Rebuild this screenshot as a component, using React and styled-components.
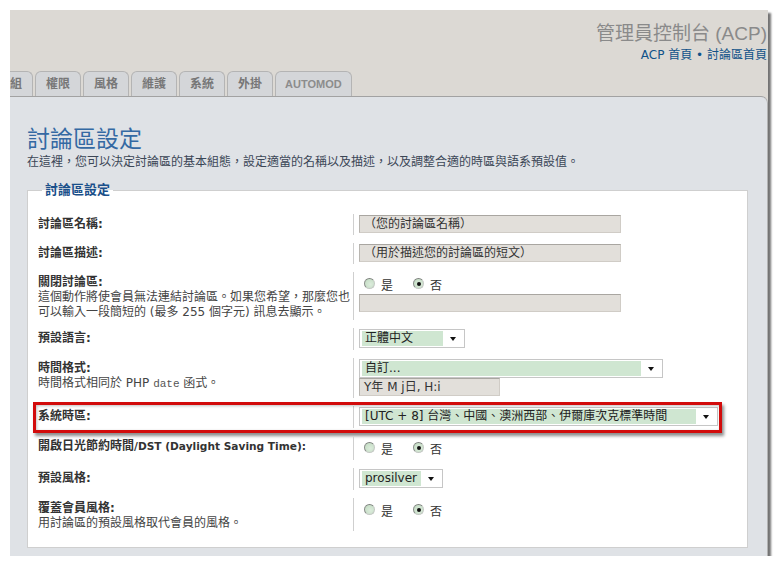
import React from 'react';
import styled, { createGlobalStyle } from 'styled-components';

const FONT = `"DejaVu Sans", "Noto Sans CJK TC", sans-serif`;

const GlobalStyle = createGlobalStyle`
  html, body { margin: 0; padding: 0; background: #fff; }
  body { font-family: ${FONT}; font-size: 12px; color: #333; }
  * { box-sizing: border-box; }
`;

const Frame = styled.div`
  margin: 10px 0 0 10px;
  width: 758px;
  height: 546px;
  display: flex;
  flex-direction: column;
  background: #dcd9d4;
  box-shadow: 3px 3px 2px rgba(0, 0, 0, 0.55);
  overflow: hidden;
`;

const Header = styled.header`
  height: 86px;
  display: flex;
  flex-direction: column;
  padding-top: 12px;
`;

const Brand = styled.div`
  align-self: flex-end;
  text-align: right;
  padding-right: 1px;
`;

const BrandTitle = styled.div`
  font-family: "Liberation Sans", "Noto Sans CJK TC", sans-serif;
  font-size: 19px;
  line-height: 24px;
  color: #8a8a8a;
  white-space: nowrap;
`;

const BrandLinks = styled.div`
  margin-top: 2px;
  font-size: 12px;
  line-height: 15px;
  color: #105289;
  white-space: nowrap;
`;

const TabBar = styled.nav`
  margin-top: auto;
  margin-left: -23px;
  display: flex;
  align-items: flex-end;
  gap: 2px;
`;

const Tab = styled.span`
  height: 25px;
  padding: 0 ${(p) => (p.$latin ? 9 : 10)}px;
  border: 1px solid #b4b4b4;
  border-bottom: 0;
  border-radius: 6px 6px 0 0;
  background: #d4d6d9;
  color: ${(p) => (p.$latin ? '#8c8c8c' : '#777')};
  font-family: ${(p) => (p.$latin ? '"Liberation Sans", sans-serif' : FONT)};
  font-weight: bold;
  font-size: ${(p) => (p.$latin ? '11px' : '12px')};
  line-height: 25px;
  white-space: nowrap;
`;

const Panel = styled.main`
  flex: 1;
  display: flex;
  flex-direction: column;
  background: #dfe2e6;
  border-top: 1px solid #a2a2a2;
  border-right: 1px solid #b2b2b2;
  border-top-right-radius: 7px;
  padding: 0 19px 8px 17px;
`;

const PageTitle = styled.h1`
  margin: 28px 0 0;
  font-size: 23px;
  line-height: 28px;
  font-weight: normal;
  color: #3469a3;
`;

const Intro = styled.p`
  margin: 2px 0 0;
  font-size: 12px;
  line-height: 15px;
  color: #3b4656;
`;

const Fieldset = styled.fieldset`
  flex: 1;
  margin: 12px 0 0;
  padding: 16px 10px 0;
  border: 1px solid #cfcfcf;
  background: #fff;
  min-width: 0;
`;

const Legend = styled.legend`
  margin-left: 4px;
  padding: 0 3px;
  font-size: 13px;
  line-height: 16px;
  font-weight: bold;
  color: #1a4f8a;
`;

const Row = styled.div`
  position: relative;
  display: grid;
  grid-template-columns: 315px 1fr;
  margin-bottom: 8px;
`;

const Marked = styled.div`
  position: absolute;
  left: -5px;
  top: -4px;
  width: 689px;
  height: 31px;
  border: 3px solid #d20b0b;
  box-shadow: 2px 3px 3px rgba(0, 0, 0, 0.45), inset 1px 1px 3px rgba(0, 0, 0, 0.25);
  pointer-events: none;
`;

const Label = styled.div`
  padding-top: 3px;
  line-height: 15px;
`;

const LabelTitle = styled.div`
  font-weight: bold;
  color: #333;
  white-space: nowrap;
`;

const Latin = styled.span`
  font-size: 10.6px;
`;

const Hint = styled.div`
  color: #444;
`;

const Code = styled.span`
  font-family: "Liberation Mono", monospace;
  font-size: 11px;
  color: #555;
`;

const Field = styled.div`
  border-left: 1px solid #cfcfcf;
  padding: 1px 0 2px 5px;
  display: flex;
  flex-direction: column;
  align-items: flex-start;
`;

const TextBox = styled.div`
  width: ${(p) => p.$w}px;
  height: 18px;
  padding: 0 4px;
  background: #e2dfda;
  border: 1px solid #d0ccc6;
  border-top-color: #a9a6a1;
  border-left-color: #b9b6b1;
  font-size: 12px;
  line-height: 16px;
  color: #333;
  white-space: nowrap;
  overflow: hidden;
`;

const Select = styled.div`
  width: ${(p) => p.$w}px;
  height: 19px;
  display: flex;
  align-items: stretch;
  padding: 1px 2px;
  background: #fff;
  border: 1px solid #c6c6c6;
`;

const Choice = styled.span`
  flex: 1;
  padding: 0 3px;
  background: #cfe6d1;
  font-size: 12px;
  line-height: 15px;
  color: #222;
  white-space: nowrap;
  overflow: hidden;
`;

const Caret = styled.span`
  width: 19px;
  display: flex;
  align-items: center;
  justify-content: center;
  &::after {
    content: '';
    border-left: 3.5px solid transparent;
    border-right: 3.5px solid transparent;
    border-top: 4px solid #111;
    margin-top: 1px;
  }
`;

const RadioGroup = styled.div`
  display: flex;
  height: 21px;
`;

const RadioOption = styled.label`
  display: flex;
  align-items: flex-start;
  margin-left: ${(p) => (p.$first ? 5 : 20)}px;
`;

const Dot = styled.span`
  margin-top: 5px;
  width: 11px;
  height: 11px;
  border-radius: 50%;
  border: 1px solid #c4c9c4;
  border-top-color: #7d817d;
  border-left-color: #8a8e8a;
  background: radial-gradient(circle at 60% 60%, #dcecdc 0%, #c8dfc8 70%, #b6ccb6 100%);
  display: flex;
  align-items: center;
  justify-content: center;
  &::after {
    content: '';
    width: 4px;
    height: 4px;
    border-radius: 50%;
    background: ${(p) => (p.$on ? '#111' : 'transparent')};
  }
`;

const RadioText = styled.span`
  margin: 6px 0 0 6px;
  font-size: 12px;
  line-height: 15px;
  color: #333;
`;

function YesNo() {
  return (
    <RadioGroup>
      <RadioOption $first>
        <Dot />
        <RadioText>是</RadioText>
      </RadioOption>
      <RadioOption>
        <Dot $on />
        <RadioText>否</RadioText>
      </RadioOption>
    </RadioGroup>
  );
}

function Dropdown({ width, value }) {
  return (
    <Select $w={width}>
      <Choice>{value}</Choice>
      <Caret />
    </Select>
  );
}

const tabs = ['群組', '權限', '風格', '維護', '系統', '外掛'];

export default function App() {
  return (
    <>
      <GlobalStyle />
      <Frame>
        <Header>
          <Brand>
            <BrandTitle>管理員控制台 (ACP)</BrandTitle>
            <BrandLinks>ACP 首頁 • 討論區首頁</BrandLinks>
          </Brand>
          <TabBar>
            {tabs.map((t) => (
              <Tab key={t}>{t}</Tab>
            ))}
            <Tab $latin>AUTOMOD</Tab>
          </TabBar>
        </Header>
        <Panel>
          <PageTitle>討論區設定</PageTitle>
          <Intro>在這裡，您可以決定討論區的基本組態，設定適當的名稱以及描述，以及調整合適的時區與語系預設值。</Intro>
          <Fieldset>
            <Legend>討論區設定</Legend>

            <Row>
              <Label><LabelTitle>討論區名稱:</LabelTitle></Label>
              <Field><TextBox $w={262}>（您的討論區名稱）</TextBox></Field>
            </Row>

            <Row>
              <Label><LabelTitle>討論區描述:</LabelTitle></Label>
              <Field><TextBox $w={262}>（用於描述您的討論區的短文）</TextBox></Field>
            </Row>

            <Row>
              <Label>
                <LabelTitle>關閉討論區:</LabelTitle>
                <Hint>這個動作將使會員無法連結討論區。如果您希望，那麼您也可以輸入一段簡短的 (最多 255 個字元) 訊息去顯示。</Hint>
              </Label>
              <Field>
                <YesNo />
                <TextBox $w={262} />
              </Field>
            </Row>

            <Row>
              <Label><LabelTitle>預設語言:</LabelTitle></Label>
              <Field><Dropdown width={106} value="正體中文" /></Field>
            </Row>

            <Row>
              <Label>
                <LabelTitle>時間格式:</LabelTitle>
                <Hint>時間格式相同於 PHP <Code>date</Code> 函式。</Hint>
              </Label>
              <Field>
                <Dropdown width={304} value="自訂..." />
                <TextBox $w={141}>Y年 M j日, H:i</TextBox>
              </Field>
            </Row>

            <Row>
              <Marked />
              <Label><LabelTitle>系統時區:</LabelTitle></Label>
              <Field><Dropdown width={359} value="[UTC + 8] 台灣、中國、澳洲西部、伊爾庫次克標準時間" /></Field>
            </Row>

            <Row>
              <Label>
                <LabelTitle>開啟日光節約時間<Latin>/DST (Daylight Saving Time):</Latin></LabelTitle>
              </Label>
              <Field><YesNo /></Field>
            </Row>

            <Row>
              <Label><LabelTitle>預設風格:</LabelTitle></Label>
              <Field><Dropdown width={84} value="prosilver" /></Field>
            </Row>

            <Row>
              <Label>
                <LabelTitle>覆蓋會員風格:</LabelTitle>
                <Hint>用討論區的預設風格取代會員的風格。</Hint>
              </Label>
              <Field><YesNo /></Field>
            </Row>
          </Fieldset>
        </Panel>
      </Frame>
    </>
  );
}
